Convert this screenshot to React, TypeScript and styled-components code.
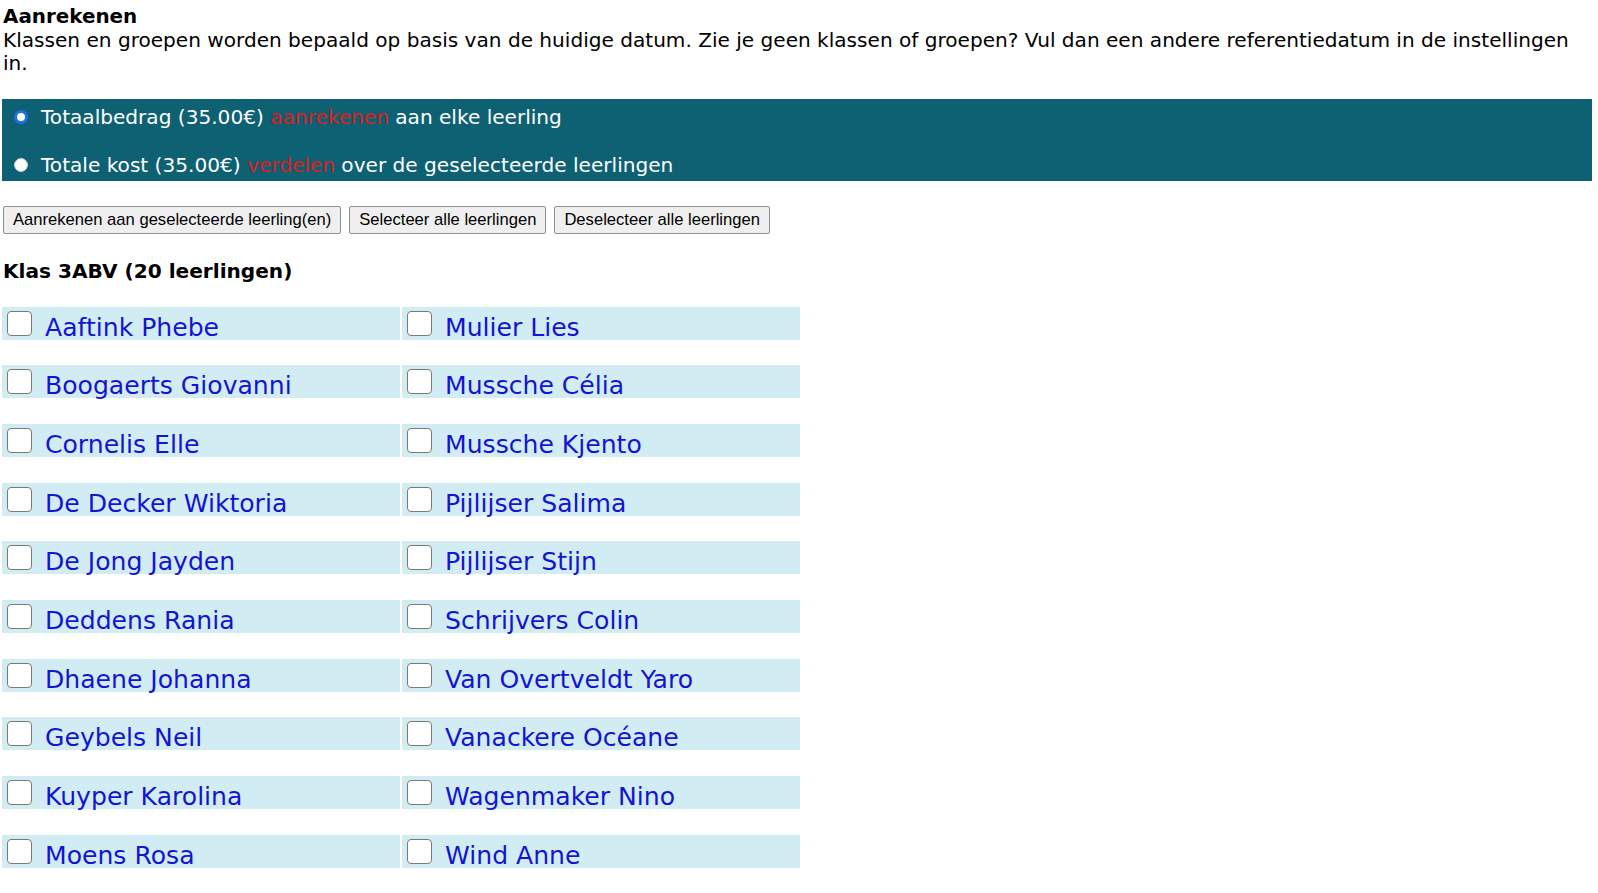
import React from "react";
import styled, { createGlobalStyle } from "styled-components";

const GlobalStyle = createGlobalStyle`
  html, body { margin: 0; padding: 0; background: #ffffff; }
  body { font-family: "DejaVu Sans", Verdana, sans-serif; color: #000; }
`;

const Page = styled.div`
  padding: 5px 6px 20px 2px;
`;

const Intro = styled.div`
  padding: 0 15px 0 1px;
  font-size: 20.08px;
  line-height: 23.5px;
`;

const Title = styled.div`
  font-weight: bold;
  font-size: 19.9px;
`;

const ChoiceBar = styled.div`
  margin-top: 23px;
  background: #0e6073;
  display: flex;
  flex-direction: column;
  gap: 14px;
`;

const ChoiceRow = styled.label`
  height: 34px;
  box-sizing: border-box;
  padding-top: 2px;
  display: flex;
  align-items: center;
  color: #ffffff;
  font-size: 20.1px;
`;

const RadioDot = styled.span<{ $checked?: boolean }>`
  width: 14px;
  height: 14px;
  box-sizing: border-box;
  border-radius: 50%;
  margin-left: 12px;
  margin-right: 13px;
  background: #ffffff;
  border: ${(p) => (p.$checked ? "3px solid #1f6fe8" : "1px solid #c8c8c8")};
`;

const Accent = styled.span`
  color: #d9201f;
`;

const Toolbar = styled.div`
  margin-top: 25px;
  display: flex;
  gap: 8px;
  padding-left: 1px;
`;

const Button = styled.button`
  height: 28px;
  padding: 0 9px;
  font-family: "Liberation Sans", Arial, sans-serif;
  font-size: 16.6px;
  color: #000;
  background: #efefef;
  border: 1px solid #8f8f8f;
  border-radius: 2px;
`;

const ClassHeading = styled.div`
  margin-top: 26px;
  padding-left: 1px;
  font-weight: bold;
  font-size: 20.1px;
  line-height: 23px;
`;

const Grid = styled.div`
  margin-top: 24px;
  display: grid;
  grid-template-columns: 398px 398px;
  column-gap: 2px;
  grid-auto-rows: 33px;
  row-gap: 25.7px;
`;

const Cell = styled.label`
  background: #d1edf3;
  display: flex;
  align-items: flex-start;
  padding-left: 5px;
`;

const Check = styled.input`
  appearance: none;
  -webkit-appearance: none;
  margin: 4px 0 0 0;
  width: 25px;
  height: 25px;
  box-sizing: border-box;
  background: #ffffff;
  border: 1.5px solid #7a7a7a;
  border-radius: 4px;
  flex: none;
`;

const Name = styled.span`
  margin-left: 13px;
  padding-top: 5px;
  line-height: 32px;
  font-size: 25.1px;
  color: #1414d2;
  white-space: nowrap;
`;

const left = [
  "Aaftink Phebe",
  "Boogaerts Giovanni",
  "Cornelis Elle",
  "De Decker Wiktoria",
  "De Jong Jayden",
  "Deddens Rania",
  "Dhaene Johanna",
  "Geybels Neil",
  "Kuyper Karolina",
  "Moens Rosa",
];

const right = [
  "Mulier Lies",
  "Mussche Célia",
  "Mussche Kjento",
  "Pijlijser Salima",
  "Pijlijser Stijn",
  "Schrijvers Colin",
  "Van Overtveldt Yaro",
  "Vanackere Océane",
  "Wagenmaker Nino",
  "Wind Anne",
];

export default function App() {
  const cells: string[] = [];
  left.forEach((n, i) => {
    cells.push(n);
    cells.push(right[i]);
  });
  return (
    <Page>
      <GlobalStyle />
      <Intro>
        <Title>Aanrekenen</Title>
        Klassen en groepen worden bepaald op basis van de huidige datum. Zie je geen klassen of groepen? Vul dan een andere referentiedatum in de instellingen in.
      </Intro>
      <ChoiceBar>
        <ChoiceRow>
          <RadioDot $checked />
          <span>
            Totaalbedrag (35.00€) <Accent>aanrekenen</Accent> aan elke leerling
          </span>
        </ChoiceRow>
        <ChoiceRow>
          <RadioDot />
          <span>
            Totale kost (35.00€) <Accent>verdelen</Accent> over de geselecteerde leerlingen
          </span>
        </ChoiceRow>
      </ChoiceBar>
      <Toolbar>
        <Button>Aanrekenen aan geselecteerde leerling(en)</Button>
        <Button>Selecteer alle leerlingen</Button>
        <Button>Deselecteer alle leerlingen</Button>
      </Toolbar>
      <ClassHeading>Klas 3ABV (20 leerlingen)</ClassHeading>
      <Grid>
        {cells.map((n) => (
          <Cell key={n}>
            <Check type="checkbox" />
            <Name>{n}</Name>
          </Cell>
        ))}
      </Grid>
    </Page>
  );
}
